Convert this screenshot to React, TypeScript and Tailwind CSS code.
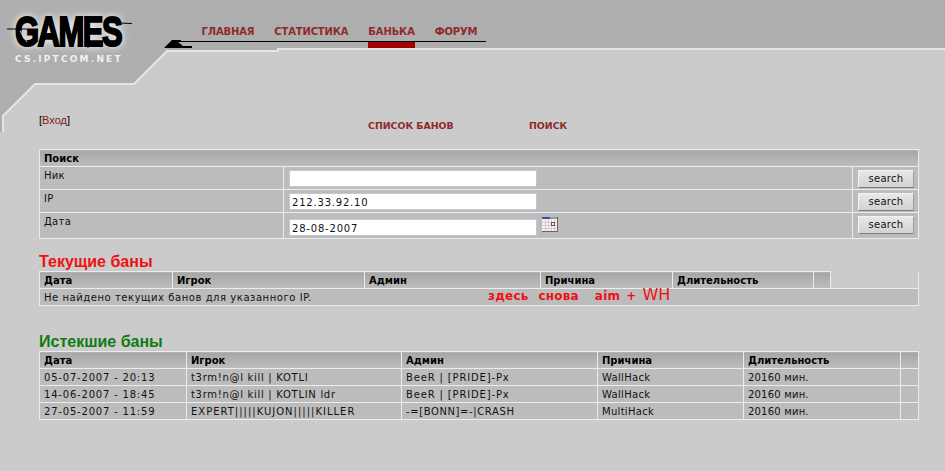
import React from 'react';

const verdana = { fontFamily: '"DejaVu Sans", Verdana, sans-serif' };
const arial = { fontFamily: '"Liberation Sans", Arial, sans-serif' };

const th = 'border border-[#ececec] bg-gradient-to-b from-[#a6a6a6] to-[#bdbdbd] px-[4px] text-left align-middle text-[10px] font-bold leading-[12px] text-black';
const td = 'border border-[#ececec] bg-[#bcbcbc] px-[4px] text-left text-[10px] font-normal leading-[12px] text-[#111]';

const expired = [
  ['05-07-2007 - 20:13', 't3rm!n@l kill | KOTLI', 'BeeR | [PRIDE]-Px', 'WallHack', '20160 мин.'],
  ['14-06-2007 - 18:45', 't3rm!n@l kill | KOTLIN ldr', 'BeeR | [PRIDE]-Px', 'WallHack', '20160 мин.'],
  ['27-05-2007 - 11:59', 'EXPERT|||||KUJON|||||KILLER', '-=[BONN]=-|CRASH', 'MultiHack', '20160 мин.'],
];

// колонки шире в оригинале, подгонка по ширине текста
const colTracking = ['tracking-[0.8px]', 'tracking-[0.7px]', 'tracking-[0.85px]', 'tracking-[0.3px]', 'tracking-[0.2px]'];

const navItems = ['ГЛАВНАЯ', 'СТАТИСТИКА', 'БАНЬКА', 'ФОРУМ'];

function CalendarIcon() {
  return (
    <svg width="16" height="15" viewBox="0 0 16 15" className="absolute left-[253px] top-[-2px]">
      <rect x="0" y="0" width="16" height="15" fill="#f4f4f4" />
      <rect x="0" y="0" width="8" height="2" fill="#4a4aa8" />
      <rect x="8" y="0" width="8" height="2" fill="#999" />
      <path d="M0 5.5H15M0 8.5H15M0 11.5H15M3.5 2V14M6.5 2V14M9.5 2V14M12.5 2V14" stroke="#cfcfcf" strokeWidth="1" />
      <rect x="9.5" y="5.5" width="3" height="3" fill="#eee" stroke="#a04040" strokeWidth="1" />
      <path d="M15.5 0V15M0 14.5H16" stroke="#666" strokeWidth="1" />
    </svg>
  );
}

function SearchRow({ label, value, height, inputTop, icon }: { label: string; value: string; height: string; inputTop: string; icon?: boolean }) {
  return (
    <tr className={height}>
      <td className={`${td} align-top pt-[3px] tracking-[0.3px]`}>{label}</td>
      <td className={`${td} align-top pl-[5px]`}>
        <div className={`relative ${inputTop}`}>
          <input
            readOnly
            value={value}
            className="block h-[17px] w-[248px] border border-[#c2c7d4] bg-white px-[2px] pt-[2px] text-[10px] tracking-[0.8px] text-[#111] outline-none"
          />
          {icon && <CalendarIcon />}
        </div>
      </td>
      <td className={`${td} align-top pl-[5px] pt-[3px]`}>
        <button className="block h-[18px] w-[56px] border border-t-[#f2f2f2] border-l-[#f2f2f2] border-r-[#a0a0a0] border-b-[#808080] bg-gradient-to-b from-[#e8e8e8] to-[#d2d2d2] text-center text-[10px] tracking-[0.3px] text-[#111]">
          search
        </button>
      </td>
    </tr>
  );
}

export default function App() {
  return (
    <div className="relative min-h-screen overflow-hidden bg-[#aeaeae]" style={verdana}>
      {/* header shape */}
      <svg width="945" height="471" className="absolute left-0 top-0">
        <path d="M0 472V132H3V116L35 84H134L167 51H278V49H946V472Z" fill="#cbcbcb" />
        <path d="M3 132V116L35 84H134L167 51H278V49H946" fill="none" stroke="#e6e6e6" strokeWidth="2" />
        <path d="M164 48L172 40H181V41H486V42H178L183 46H192V48Z" fill="#000" />
      </svg>

      <div className="relative">
        <header className="flex h-[108px]">
          <div className="relative w-[201px] shrink-0">
            <div
              className="absolute left-[15px] top-[11px] origin-top-left scale-y-[1.4] text-[31px] font-black leading-[30px] tracking-[-1.5px] text-black [-webkit-text-stroke:1.5px_#000] [text-shadow:0_0_6px_#fff,0_0_10px_#ddd]"
              style={arial}
            >
              GAMES
            </div>
            <svg width="140" height="50" className="absolute left-0 top-0">
              <path d="M7 29H38M107 22.5L132 23.5M88 26V48" stroke="#000" strokeWidth="1" fill="none" />
              <path d="M20 31L27 42" stroke="#d8d8d8" strokeWidth="1" fill="none" />
            </svg>
            <div className="absolute left-[15px] top-[53px] text-[9px] font-bold leading-[12px] tracking-[2.2px] text-[#f0f0f0]">
              CS.IPTCOM.NET
            </div>
          </div>
          <nav className="flex h-[48px] gap-[20px] pl-[0.5px]">
            {navItems.map((item) => (
              <div key={item} className="flex flex-col justify-between pt-[25px]">
                <a className="text-[10px] font-bold leading-[13px] tracking-[-0.15px] text-[#8f2a2a]">{item}</a>
                <div className={item === 'БАНЬКА' ? 'h-[6px] bg-[#a00000]' : 'h-[6px]'} />
              </div>
            ))}
          </nav>
        </header>

        <main className="pl-[39px] pr-[26px]">
          <div className="flex h-[41px]">
            <div className="w-[329px] pt-[6px] text-[11px] leading-[12px] text-black" style={arial}>
              [<a className="text-[#8b1a1a]">Вход</a>]
            </div>
            <a className="w-[161px] pt-[12px] text-[9.4px] font-bold leading-[12px] text-[#8f2a2a]">СПИСОК БАНОВ</a>
            <a className="pt-[12px] text-[9.4px] font-bold leading-[12px] text-[#8f2a2a]">ПОИСК</a>
          </div>

          <table className="w-[880px] table-fixed border-collapse">
            <colgroup>
              <col className="w-[244px]" />
              <col className="w-[569px]" />
              <col />
            </colgroup>
            <tbody>
              <tr className="h-[17px]">
                <th colSpan={3} className={`${th} pt-[1px]`}>Поиск</th>
              </tr>
              <SearchRow label="Ник" value="" height="h-[23px]" inputTop="top-[3px]" />
              <SearchRow label="IP" value="212.33.92.10" height="h-[23px]" inputTop="top-[3px]" />
              <SearchRow label="Дата" value="28-08-2007" height="h-[26px]" inputTop="top-[6px]" icon />
            </tbody>
          </table>

          <h2 className="mt-[13px] text-[16px] font-bold leading-[19px] text-[#ee1111]" style={arial}>
            Текущие баны
          </h2>
          <table className="w-[880px] table-fixed border-collapse">
            <colgroup>
              <col className="w-[133px]" />
              <col className="w-[192px]" />
              <col className="w-[176px]" />
              <col className="w-[132px]" />
              <col className="w-[141px]" />
              <col className="w-[17px]" />
              <col />
            </colgroup>
            <thead>
              <tr className="h-[17px]">
                <th className={`${th} pt-[2px]`}>Дата</th>
                <th className={`${th} pt-[2px]`}>Игрок</th>
                <th className={`${th} pt-[2px]`}>Админ</th>
                <th className={`${th} pt-[2px]`}>Причина</th>
                <th className={`${th} pt-[2px]`}>Длительность</th>
                <th className={th} />
                <th className="border-r border-b border-[#ececec]" />
              </tr>
            </thead>
            <tbody>
              <tr className="h-[17px]">
                <td colSpan={7} className={`${td} relative pt-[2px] tracking-[0.55px]`}>
                  Не найдено текущих банов для указанного IP.
                  <span className="absolute left-[448px] top-[-2px] flex items-baseline text-[12px] font-bold leading-[15px] tracking-[0.2px] text-[#ee1111]">
                    <span>здесь</span>
                    <span className="ml-[10px]">снова</span>
                    <span className="ml-[16px]">aim</span>
                    <span className="ml-[6px]">+</span>
                    <span className="ml-[6px] text-[16px] font-normal tracking-normal">WH</span>
                  </span>
                </td>
              </tr>
            </tbody>
          </table>

          <h2 className="mt-[26px] text-[16px] font-bold leading-[19px] text-[#107c10]" style={arial}>
            Истекшие баны
          </h2>
          <table className="w-[880px] table-fixed border-collapse">
            <colgroup>
              <col className="w-[147px]" />
              <col className="w-[215px]" />
              <col className="w-[196px]" />
              <col className="w-[146px]" />
              <col className="w-[157px]" />
              <col />
            </colgroup>
            <thead>
              <tr className="h-[17px]">
                <th className={`${th} pt-[1px]`}>Дата</th>
                <th className={`${th} pt-[1px]`}>Игрок</th>
                <th className={`${th} pt-[1px]`}>Админ</th>
                <th className={`${th} pt-[1px]`}>Причина</th>
                <th className={`${th} pt-[1px]`}>Длительность</th>
                <th className={th} />
              </tr>
            </thead>
            <tbody>
              {expired.map((row) => (
                <tr key={row[0]} className="h-[17px]">
                  {row.map((cell, i) => (
                    <td
                      key={i}
                      className={`${td} pt-[2px] ${
                        cell.startsWith('EXPERT') ? 'tracking-[1px]' : cell.startsWith('-=') ? 'tracking-[0.6px]' : colTracking[i]
                      }`}
                    >
                      {cell}
                    </td>
                  ))}
                  <td className={td} />
                </tr>
              ))}
            </tbody>
          </table>
        </main>
      </div>
    </div>
  );
}
